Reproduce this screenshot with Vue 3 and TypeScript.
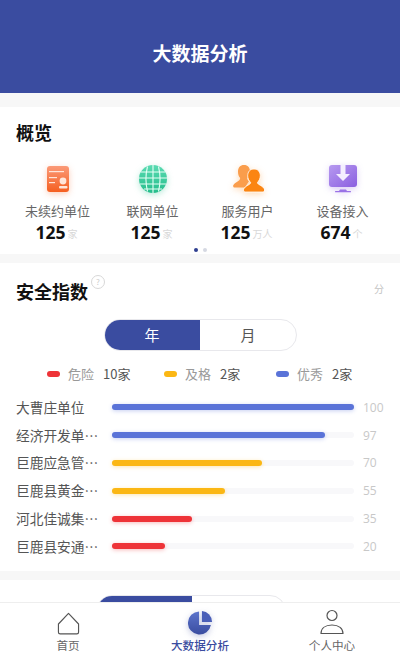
<script setup lang="ts">
const stats = [
  { name: '未续约单位', value: '125', unit: '家', kind: 'cert' },
  { name: '联网单位', value: '125', unit: '家', kind: 'globe' },
  { name: '服务用户', value: '125', unit: '万人', kind: 'users' },
  { name: '设备接入', value: '674', unit: '个', kind: 'device' },
]
const legend = [
  { name: '危险', count: '10家', color: '#ee3338' },
  { name: '及格', count: '2家', color: '#fbb714' },
  { name: '优秀', count: '2家', color: '#5a73d8' },
]
const rows = [
  { name: '大曹庄单位', value: 100, width: 100, color: '#5a73d8' },
  { name: '经济开发单…', value: 97, width: 88, color: '#5a73d8' },
  { name: '巨鹿应急管…', value: 70, width: 62, color: '#fbb714' },
  { name: '巨鹿县黄金…', value: 55, width: 46.5, color: '#fbb714' },
  { name: '河北佳诚集…', value: 35, width: 33, color: '#ee3338' },
  { name: '巨鹿县安通…', value: 20, width: 22, color: '#ee3338' },
]
</script>

<template>
  <div class="page">
    <header class="header">大数据分析</header>

    <section class="card overview">
      <h2 class="title">概览</h2>
      <div class="stats">
        <div v-for="s in stats" :key="s.name" class="stat">
          <div class="icon" :class="s.kind">
            <svg v-if="s.kind === 'cert'" viewBox="0 0 32 32" width="32" height="32">
              <defs><linearGradient id="g1" x1="0" y1="0" x2="0" y2="1"><stop offset="0" stop-color="#fb9a78" /><stop offset="1" stop-color="#f55f20" /></linearGradient></defs>
              <rect x="5" y="3" width="22" height="26" rx="3" fill="url(#g1)" />
              <rect x="7" y="8" width="15" height="1.200" fill="#ffe6da" />
              <rect x="7" y="14" width="8" height="1.200" fill="#ffe6da" />
              <rect x="7" y="19" width="6" height="1.200" fill="#ffe6da" />
              <circle cx="21" cy="18" r="3.400" fill="#ffe6da" />
              <rect x="17" y="23" width="8.500" height="2.600" rx="1" fill="#ffe6da" />
            </svg>
            <svg v-else-if="s.kind === 'globe'" viewBox="0 0 32 32" width="32" height="32">
              <defs><linearGradient id="g2" x1="0" y1="0" x2="0" y2="1"><stop offset="0" stop-color="#5adbb2" /><stop offset="1" stop-color="#25bd8b" /></linearGradient></defs>
              <circle cx="16" cy="16" r="14" fill="url(#g2)" />
              <g fill="none" stroke="#e6fff6" stroke-width="1.100">
                <path d="M4 9h24M2 15h28M3 21h26M7 26h18" />
                <path d="M16 2v28M10.500 3.500c-2 8-2 17 0 25M21.500 3.500c2 8 2 17 0 25" />
              </g>
            </svg>
            <svg v-else-if="s.kind === 'users'" viewBox="0 0 32 32" width="32" height="32">
              <path d="M12 2c3.800 0 6 2.700 6 6.500 0 2.800-1.300 4.800-2.700 6.500-.2 1.500.7 2.500 1.700 3L13 24.500H2.500c-1.100 0-1.700-1.300-1.200-2.300 1.500-3 6.700-3.700 6.900-7.200C6.700 13.300 6 11.300 6 8.500 6 4.700 8.200 2 12 2z" fill="#fa9d4c" />
              <path d="M22 6c4 0 6.300 2.800 6.300 6.800 0 3-1.400 5-2.800 6.700-.3 2.200 5.800 3.200 7 6.800.4 1.100-.3 2.700-1.400 2.700H13c-1.100 0-1.800-1.600-1.400-2.700 1.200-3.600 7.300-4.600 7-6.800-1.500-1.700-2.900-3.700-2.900-6.700C15.700 8.800 18 6 22 6z" fill="#fb8512" stroke="#fff" stroke-width=".8" />
            </svg>
            <svg v-else viewBox="0 0 32 32" width="32" height="32">
              <defs><linearGradient id="g4" x1="0" y1="0" x2="1" y2="1"><stop offset="0" stop-color="#b79af0" /><stop offset="1" stop-color="#8a5ee0" /></linearGradient></defs>
              <rect x="2" y="2" width="28" height="22" rx="3" fill="url(#g4)" />
              <path d="M13.500 2h5v9h4.500L16 18l-7-7h4.500z" fill="#f4eeff" />
              <path d="M13 26.500h6l1 1.500h-8z" fill="#9a72e6" />
              <rect x="8" y="28" width="16" height="1.300" rx=".6" fill="#9a72e6" />
            </svg>
          </div>
          <div class="stat-name">{{ s.name }}</div>
          <div class="stat-value"><b>{{ s.value }}</b><span>{{ s.unit }}</span></div>
        </div>
      </div>
      <div class="dots"><i class="on"></i><i></i></div>
    </section>

    <section class="card safety">
      <div class="safety-head">
        <h2 class="title">安全指数<span class="help">?</span></h2>
        <span class="fen">分</span>
      </div>
      <div class="toggle">
        <span class="active">年</span>
        <span>月</span>
      </div>
      <div class="legend">
        <div v-for="l in legend" :key="l.name" class="legend-item">
          <i :style="{ background: l.color }"></i>
          <span class="legend-name">{{ l.name }}</span>
          <span class="legend-count">{{ l.count }}</span>
        </div>
      </div>
      <div class="rows">
        <div v-for="r in rows" :key="r.name" class="row">
          <span class="row-name">{{ r.name }}</span>
          <div class="track">
            <div class="fill" :style="{ width: r.width + '%', background: r.color, boxShadow: '0 1px 4px ' + r.color + '55' }"></div>
          </div>
          <span class="row-value">{{ r.value }}</span>
        </div>
      </div>
    </section>

    <section class="card third">
      <div class="toggle toggle2">
        <span class="active">年</span>
        <span>月</span>
      </div>
    </section>

    <nav class="tabbar">
      <div class="tab">
        <span class="tab-icon">
          <svg viewBox="0 0 24 24" width="23" height="23" fill="none" stroke="#555" stroke-width="1.200">
            <path d="M12 1.500 1.500 12.500v8.500c0 1 .8 1.800 1.800 1.800h17.400c1 0 1.800-.8 1.800-1.800v-8.500z" stroke-linejoin="round" />
          </svg>
        </span>
        <span>首页</span>
      </div>
      <div class="tab current">
        <span class="tab-icon">
          <svg viewBox="0 0 26 26" width="25" height="25">
            <defs><linearGradient id="pie" x1="0" y1="0" x2="0" y2="1"><stop offset="0" stop-color="#5c74cc" /><stop offset="1" stop-color="#3a4da0" /></linearGradient></defs>
            <path d="M11.500 1.500v14h12.300A12 12 0 1 1 11.500 1.500z" fill="url(#pie)" />
            <path d="M14.500 1A11.500 11.500 0 0 1 25 12.500H14.500z" fill="#4a5fb8" />
          </svg>
        </span>
        <span>大数据分析</span>
      </div>
      <div class="tab">
        <span class="tab-icon">
          <svg viewBox="0 0 26 26" width="26" height="26" fill="none" stroke="#555" stroke-width="1.200">
            <circle cx="13" cy="6.500" r="5" />
            <path d="M2 24.500c0-5 4-8.500 11-8.500s11 3.500 11 8.500z" stroke-linejoin="round" />
          </svg>
        </span>
        <span>个人中心</span>
      </div>
    </nav>
  </div>
</template>

<style scoped>
.page {
  position: relative;
  width: 400px;
  height: 666px;
  overflow: hidden;
  background: #f7f7f7;
  font-family: "Noto Sans CJK SC", "Noto Sans", sans-serif;
  color: #111;
}
.header {
  height: 93px;
  box-sizing: border-box;
  padding-top: 40px;
  background: #3a4ca0;
  color: #fff;
  font-size: 19px;
  line-height: 26px;
  font-weight: 700;
  text-align: center;
}
.card {
  background: #fff;
  margin-bottom: 9px;
}
.overview {
  margin-top: 14px;
  height: 147px;
  padding-top: 13px;
  box-sizing: border-box;
}
.title {
  margin: 0 0 0 16px;
  font-size: 18px;
  line-height: 24px;
  font-weight: 700;
  color: #111;
}
.stats {
  display: grid;
  grid-template-columns: repeat(4, 95px);
  padding-left: 10px;
  margin-top: 19px;
}
.stat {
  display: flex;
  flex-direction: column;
  align-items: center;
}
.icon {
  height: 32px;
  display: flex;
}
.icon.cert { filter: drop-shadow(0 2px 3px rgba(245, 95, 32, 0.3)); }
.icon.globe { filter: drop-shadow(0 2px 3px rgba(37, 189, 139, 0.3)); }
.icon.users { filter: drop-shadow(0 2px 3px rgba(251, 138, 31, 0.3)); }
.icon.device { filter: drop-shadow(0 2px 3px rgba(138, 94, 224, 0.3)); }
.stat-name {
  margin-top: 6px;
  font-size: 13px;
  line-height: 20px;
  color: #666;
}
.stat-value {
  display: flex;
  align-items: flex-end;
  line-height: 22px;
  margin-left: -2px;
}
.stat-value b {
  font-family: "Open Sans", "Noto Sans", sans-serif;
  font-size: 17.500px;
  font-weight: 700;
  color: #111;
}
.stat-value span {
  margin-left: 2px;
  font-size: 10px;
  line-height: 18px;
  color: #d8d8d8;
}
.dots {
  display: flex;
  justify-content: center;
  gap: 5px;
  margin-top: 5px;
}
.dots i {
  width: 4px;
  height: 4px;
  border-radius: 50%;
  background: #d5d8e2;
}
.dots i.on {
  background: #2f3f90;
}
.safety {
  height: 308px;
  padding-top: 16px;
  box-sizing: border-box;
}
.safety-head {
  display: flex;
  justify-content: space-between;
  align-items: flex-start;
  padding-right: 16px;
}
.help {
  position: absolute;
  margin: -4px 0 0 3px;
  width: 12px;
  height: 12px;
  border: 1px solid #d8d8d8;
  border-radius: 50%;
  font-size: 8px;
  line-height: 12px;
  text-align: center;
  font-weight: 400;
  color: #ccc;
}
.fen {
  font-size: 10px;
  line-height: 20px;
  color: #c4c4c4;
}
.toggle {
  width: 193px;
  height: 32px;
  margin: 16px 0 0 104px;
  box-sizing: border-box;
  border: 1px solid #e8e8ec;
  border-radius: 16px;
  display: grid;
  grid-template-columns: 95px 1fr;
  overflow: hidden;
  font-size: 15px;
  line-height: 30px;
  text-align: center;
  color: #555;
}
.toggle .active {
  background: #3a4ca0;
  color: #fff;
  margin: -1px 0 -1px -1px;
  line-height: 32px;
}
.legend {
  display: grid;
  grid-template-columns: 117px 112px auto;
  margin: 12px 0 0 47px;
}
.legend-item {
  display: flex;
  align-items: center;
  font-size: 13px;
  line-height: 22px;
}
.legend-item i {
  width: 13px;
  height: 6px;
  border-radius: 3px;
}
.legend-name {
  margin-left: 8px;
  color: #999;
}
.legend-count {
  margin-left: 9px;
  color: #555;
}
.rows {
  margin-top: 12px;
  display: flex;
  flex-direction: column;
  gap: 7px;
}
.row {
  display: flex;
  align-items: center;
  height: 20.800px;
  padding: 0 16px;
}
.row-name {
  width: 96px;
  flex: none;
  font-size: 13.700px;
  line-height: 20px;
  color: #555;
  white-space: nowrap;
  margin-top: -1px;
}
.track {
  width: 242px;
  flex: none;
  height: 6px;
  border-radius: 3px;
  background: #f8f8fa;
}
.fill {
  height: 100%;
  border-radius: 3px;
}
.row-value {
  margin-left: 9px;
  font-family: "Open Sans", sans-serif;
  font-size: 12px;
  color: #c8c8c8;
}
.third {
  height: 90px;
  position: relative;
}
.toggle2 {
  width: 190px;
  position: absolute;
  left: 96px;
  top: 15px;
  margin: 0;
}
.tabbar {
  position: absolute;
  left: 0;
  right: 0;
  top: 602px;
  height: 61px;
  background: #fff;
  border-top: 1px solid #eee;
  box-sizing: border-box;
  display: grid;
  grid-template-columns: 136px 128px 136px;
}
.tab {
  display: flex;
  flex-direction: column;
  align-items: center;
  padding-top: 6px;
  font-size: 11.600px;
  line-height: 18px;
  color: #666;
}
.tab-icon {
  height: 26px;
  display: flex;
  align-items: flex-end;
  margin-bottom: 1px;
}
.tab.current {
  color: #3a4ca0;
  font-weight: 500;
}
.tab.current svg {
  filter: drop-shadow(0 2px 3px rgba(58, 76, 160, 0.3));
}
</style>

<style>
html, body {
  margin: 0;
  background: #fff;
  overflow: hidden;
}
</style>
